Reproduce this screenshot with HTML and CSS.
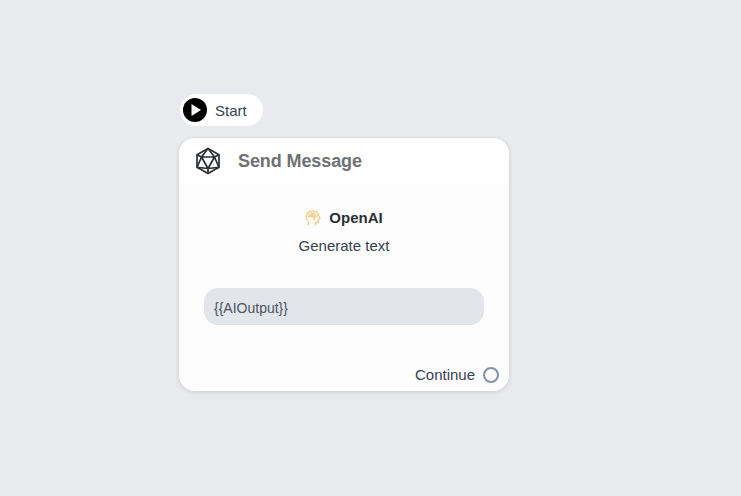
FILE: index.html
```html
<!DOCTYPE html>
<html>
<head>
    <meta charset="UTF-8">
    <title>Flow</title>
    <link rel="stylesheet" href="styles.css">
</head>
<body>
    <div class="node start-node">
        <svg class="play-icon" width="24" height="24" viewBox="0 0 24 24">
            <circle cx="12" cy="12" r="12" fill="#000"/>
            <path d="M8.500 6v12l9.500-6z" fill="#fff"/>
        </svg>
        <span>Start</span>
    </div>

    <div class="node step-node">
        <div class="step-header">
            <svg class="step-icon" width="26" height="28" viewBox="0 0 26 28" fill="none" stroke="#2b2f36" stroke-width="1.700" stroke-linejoin="round">
                <path d="M13 1.500l11 6.200v12.600l-11 6.200-11-6.200V7.700z"/>
                <path d="M13 1.500l6.500 8.500H6.500zM6.500 10L13 21.500 19.500 10M2 7.700l4.500 2.300M24 7.700L19.500 10M2 20.300L13 21.500l11-1.200M2 20.300L6.500 10M24 20.300L19.500 10M13 21.500v5"/>
            </svg>
            <h2>Send Message</h2>
        </div>
        <div class="step-body">
            <div class="provider">
                <svg class="brain-icon" width="16" height="16" viewBox="0 0 24 24" fill="none" stroke="#fdc474" stroke-width="1.700" stroke-linecap="round" stroke-linejoin="round">
                    <path d="M15.500 22.500v-4h3a2 2 0 0 0 2-2V13.500l2.300-.8-2.300-4C19.500 4 15.500 1.500 11 1.500 5.500 1.500 1.500 5.500 1.500 10.500c0 2.800 1.500 4.800 3.500 6.500v5.500"/>
                    <path d="M5.500 10c0-3 2.500-4.800 5.800-4.800S17 7.200 17 10c-2 0-3.500 1-3.500 3v2M5.500 10c2-1 5-1 6.500 1M9.500 7.800c2-.500 3.500 0 4.500 1.500"/>
                </svg>
                <strong>OpenAI</strong>
            </div>
            <p class="provider-action">Generate text</p>
            <div class="message-field">{{AIOutput}}</div>
        </div>
        <div class="step-footer">
            <span>Continue</span>
            <span class="port"></span>
        </div>
    </div>
</body>
</html>
```

FILE: styles.css
```css
html, body {
    height: 100%;
}
body {
    margin: 0;
    background-color: #e9eaee;
    font-family: "Liberation Sans", Arial, sans-serif;
    color: #374151;
    overflow: hidden;
}
.node {
    position: absolute;
    background-color: #fff;
}
.start-node {
    left: 180px;
    top: 94px;
    width: 83px;
    height: 32px;
    box-sizing: border-box;
    padding-left: 3px;
    border-radius: 16px;
    display: flex;
    align-items: center;
    gap: 8px;
    font-size: 15px;
}
.step-node {
    left: 179px;
    top: 138px;
    width: 330px;
    height: 253px;
    border-radius: 16px;
    box-shadow: 0 1px 4px rgba(0, 0, 0, 0.14);
    display: flex;
    flex-direction: column;
    overflow: hidden;
}
.step-header {
    height: 46px;
    flex-shrink: 0;
    display: flex;
    align-items: center;
    padding-left: 16px;
    gap: 17px;
    background-color: #fff;
}
.step-header h2 {
    margin: 0;
    font-size: 18px;
    font-weight: bold;
    letter-spacing: -0.1px;
    color: #6f7173;
}
.step-body {
    flex-grow: 1;
    background-color: #fdfdfd;
    padding: 25px 25px 0;
    text-align: center;
}
.provider {
    display: flex;
    justify-content: center;
    align-items: center;
    gap: 8px;
    font-size: 15px;
    line-height: 18px;
    color: #2b2f36;
}
.provider-action {
    margin: 10px 0 0;
    font-size: 15px;
    line-height: 18px;
}
.message-field {
    margin-top: 33px;
    height: 37px;
    line-height: 40px;
    border-radius: 14px;
    padding-left: 10px;
    background-color: #e2e6ea;
    font-size: 14px;
    text-align: left;
    color: #4b5563;
}
.step-footer {
    height: 32px;
    flex-shrink: 0;
    display: flex;
    justify-content: flex-end;
    align-items: center;
    gap: 8px;
    padding-right: 10px;
    font-size: 15px;
    line-height: 16px;
    background-color: #fdfdfd;
}
.port {
    width: 12px;
    height: 12px;
    border: 2px solid #8492a6;
    border-radius: 50%;
}
```
